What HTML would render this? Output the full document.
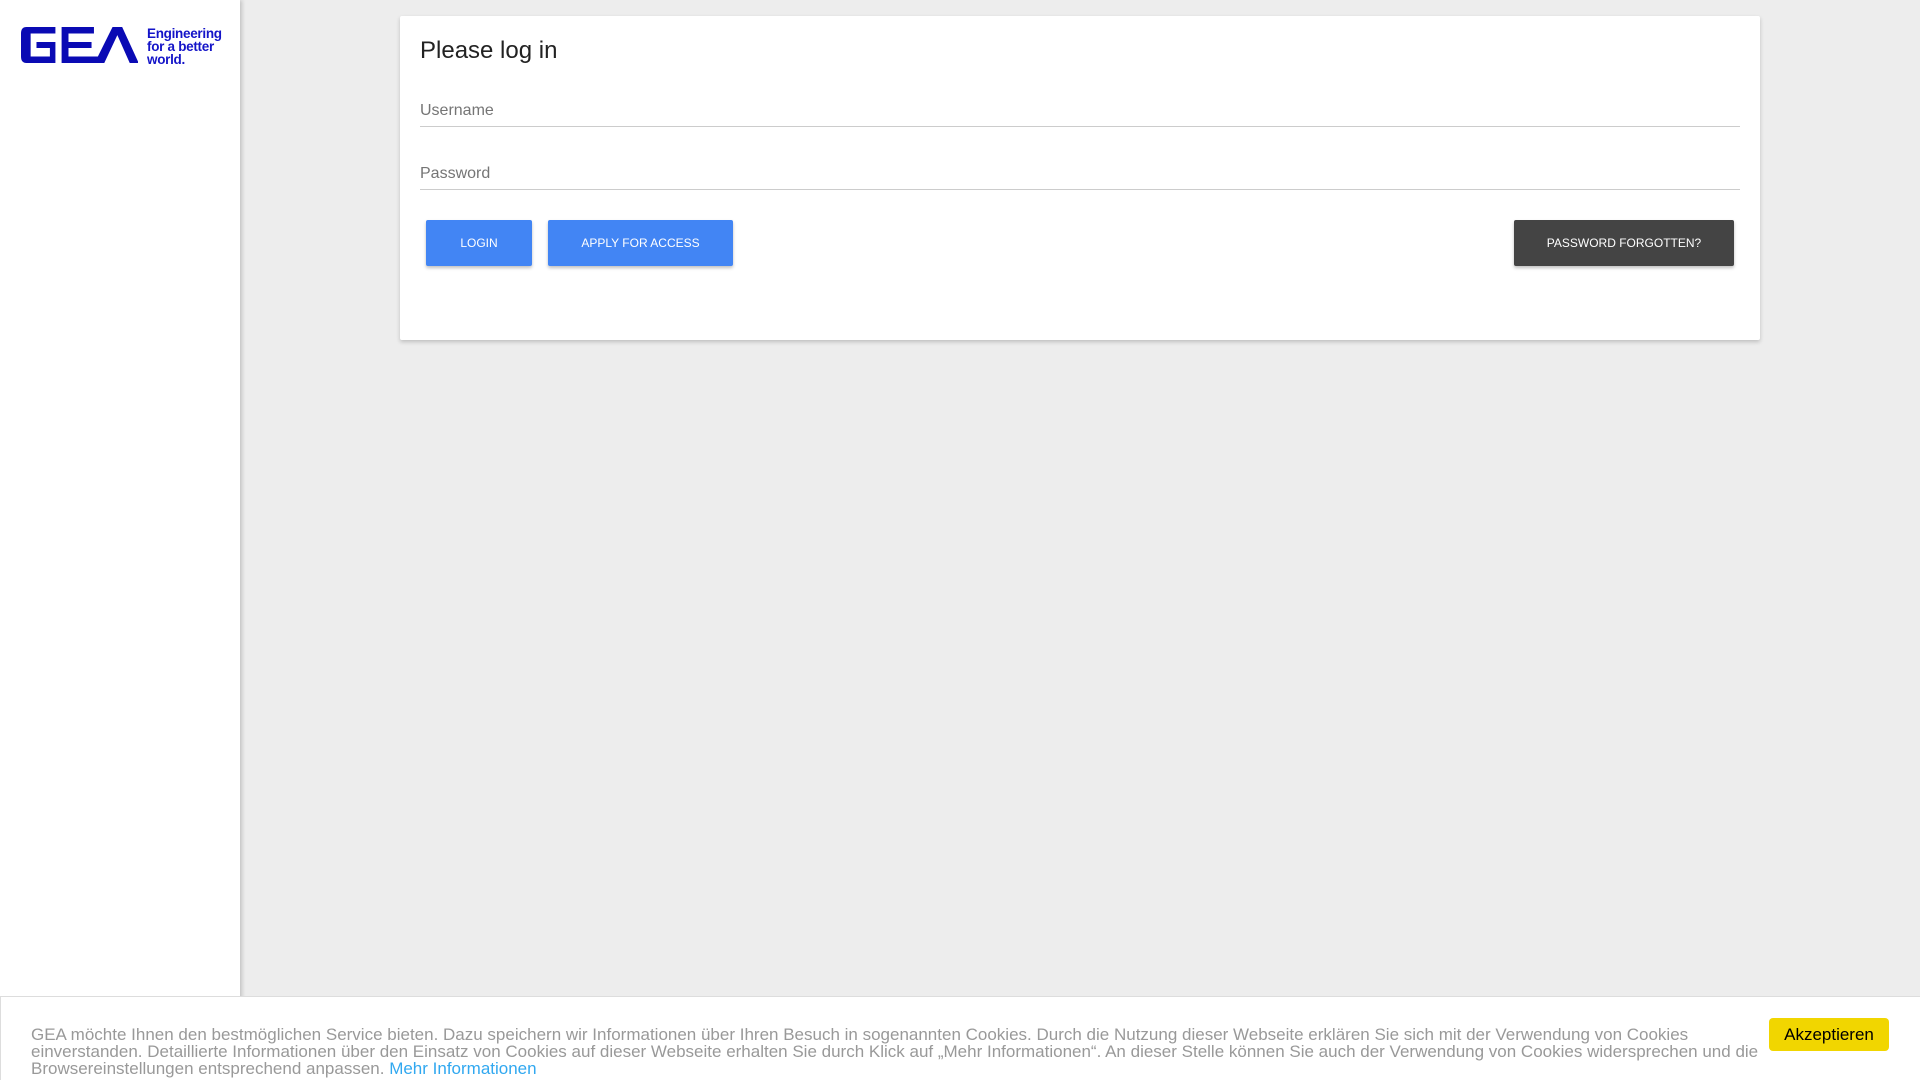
<!DOCTYPE html>
<html><head><meta charset="utf-8"><style>
*{margin:0;padding:0;box-sizing:border-box}
html,body{width:1920px;height:1080px;overflow:hidden;background:#ededed;font-family:"Liberation Sans",Arial,sans-serif}
.side{position:absolute;left:0;top:0;width:240px;height:1080px;background:#fff;box-shadow:2px 0 4px rgba(0,0,0,.18)}
.logo{position:absolute;left:21px;top:27px}
.tag{position:absolute;left:147px;top:27px;color:#1414c8;font-size:13.5px;font-weight:bold;line-height:13px;letter-spacing:-0.3px}
.card{position:absolute;left:400px;top:16px;width:1360px;height:324px;background:#fff;border-radius:2px;box-shadow:0 2px 4px rgba(0,0,0,.2)}
h1{position:absolute;left:20px;top:21px;font-weight:normal;font-size:24px;color:#222}
.lbl{position:absolute;left:20px;font-size:16px;color:#757575}
.line{position:absolute;left:20px;width:1320px;height:1px;background:#ccc}
.btn{position:absolute;top:204px;height:46px;border-radius:2px;color:#fff;font-size:12px;display:flex;align-items:center;justify-content:center;box-shadow:0 2px 3px rgba(0,0,0,.25)}
.blue{background:#4285f4}
.dark{background:#444}
.banner{position:absolute;left:0;top:996px;width:1920px;height:84px;background:#fff;border-top:1px solid #ddd;border-left:1px solid #ddd}
.btxt{position:absolute;left:30px;top:29px;width:1738px;font-size:17px;line-height:17px;color:#999}
.btxt a{color:#31a8f0;text-decoration:none}
.acc{position:absolute;left:1768px;top:21px;width:120px;height:33px;background:#f1d600;border-radius:4px;font-size:17px;color:#000;display:flex;align-items:center;justify-content:center}
</style></head><body>
<div class="side">
<svg class="logo" width="117" height="36" viewBox="0 0 340 89" preserveAspectRatio="none">
<path fill="#0a0ab4" d="M16 0H100V16H28V73H84V52H45V37H100V89H16Q0 89 0 73V16Q0 0 16 0Z"/>
<path fill="#0a0ab4" d="M118 0H212V16H138V37H205V52H138V73H225V89H118Z"/>
<path fill="#0a0ab4" d="M266 0H294L342 89H316L280 20L242 89H214Z"/>
</svg>
<div class="tag">Engineering<br>for a better<br>world.</div>
</div>
<div class="card">
<h1>Please log in</h1>
<div class="lbl" style="top:86px">Username</div>
<div class="line" style="top:110px"></div>
<div class="lbl" style="top:149px">Password</div>
<div class="line" style="top:173px"></div>
<div class="btn blue" style="left:26px;width:106px">LOGIN</div>
<div class="btn blue" style="left:148px;width:185px">APPLY FOR ACCESS</div>
<div class="btn dark" style="left:1114px;width:220px">PASSWORD FORGOTTEN?</div>
</div>
<div class="banner">
<div class="btxt">GEA möchte Ihnen den bestmöglichen Service bieten. Dazu speichern wir Informationen über Ihren Besuch in sogenannten Cookies. Durch die Nutzung dieser Webseite erklären Sie sich mit der Verwendung von Cookies einverstanden. Detaillierte Informationen über den Einsatz von Cookies auf dieser Webseite erhalten Sie durch Klick auf „Mehr Informationen“. An dieser Stelle können Sie auch der Verwendung von Cookies widersprechen und die Browsereinstellungen entsprechend anpassen. <a>Mehr Informationen</a></div>
<div class="acc">Akzeptieren</div>
</div>
</body></html>
